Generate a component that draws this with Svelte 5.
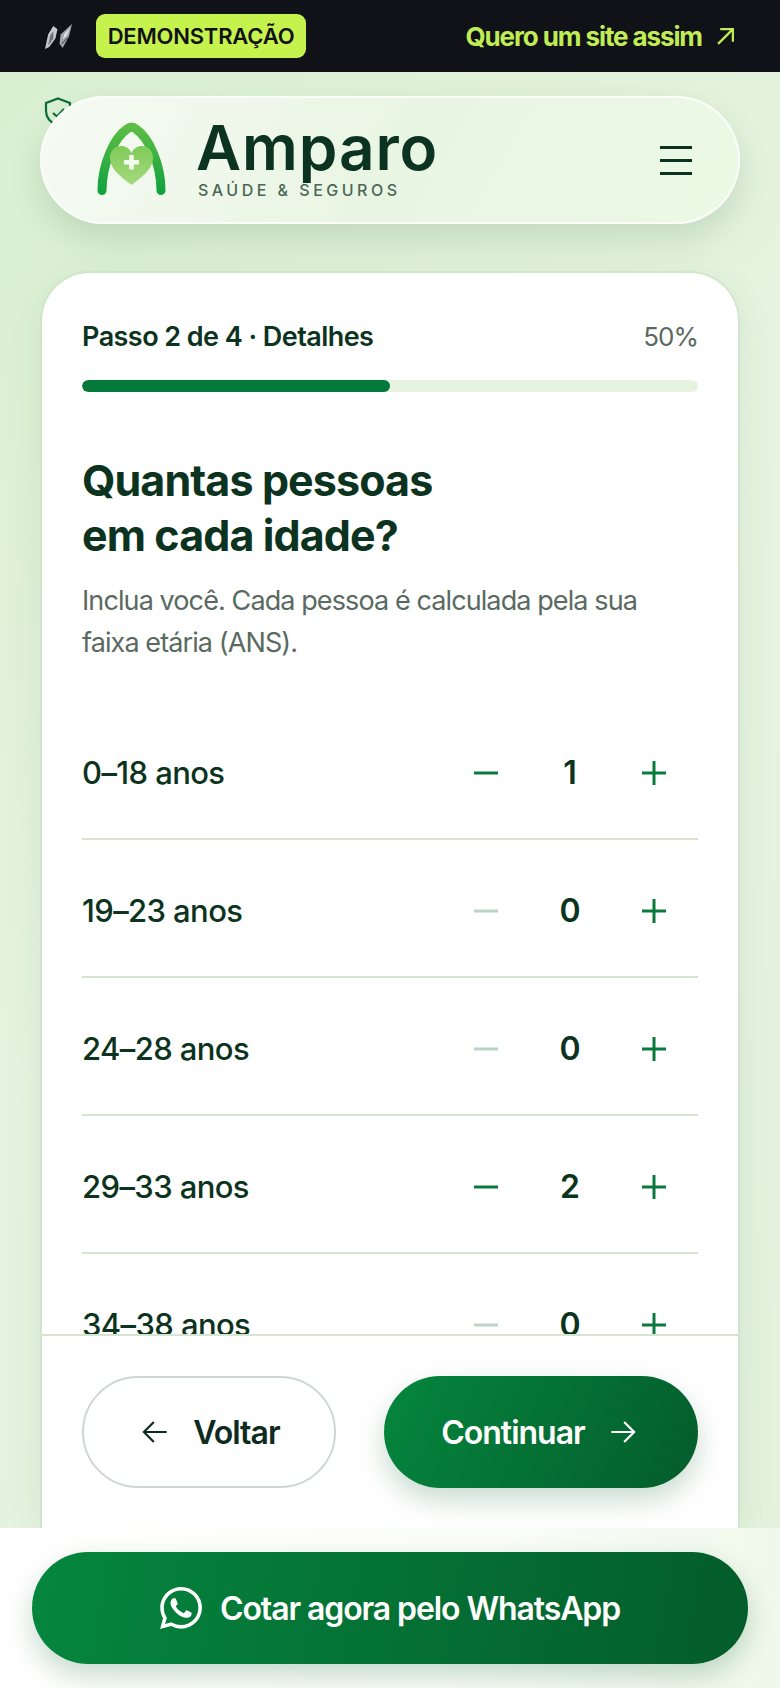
<script>
  const rows = [
    { label: '0–18 anos', n: 1 },
    { label: '19–23 anos', n: 0 },
    { label: '24–28 anos', n: 0 },
    { label: '29–33 anos', n: 2 },
    { label: '34–38 anos', n: 0 }
  ];
</script>

<div class="page">
  <div class="demo">
    <svg class="mark" viewBox="0 0 26 24" aria-hidden="true">
      <path d="M0 24 L3 10 L8 2 L12 5 L10 14 L4 22 Z" fill="#c9c9cc" />
      <path d="M3 21 L5 11 L8 7 L8 14 Z" fill="#6f6f74" />
      <path d="M14 19 L15 10 L26 0 L23 12 L17 23 Z" fill="#a6a6aa" />
      <path d="M17 15 L19 9 L24 4 L21 11 Z" fill="#e3e3e5" />
      <path d="M16 19 L22 13" stroke="#55555a" stroke-width="1" />
    </svg>
    <span class="chip">DEMONSTRAÇÃO</span>
    <a class="want" href="#top">
      Quero um site assim
      <svg viewBox="0 0 16 16" width="17" height="17" aria-hidden="true"><path d="M1 15 L15 1 M3 1 H15 V13" fill="none" stroke="currentColor" stroke-width="2.200" /></svg>
    </a>
  </div>

  <main class="main">
    <svg class="shield" viewBox="0 0 28 30" aria-hidden="true">
      <path d="M14 1.500 L26 6 V14 C26 21 21 26 14 29 C7 26 2 21 2 14 V6 Z" fill="none" stroke="#0b6b3a" stroke-width="2.200" />
      <path d="M9 16 L13 19.500 L20 12" fill="none" stroke="#0b6b3a" stroke-width="2.200" />
    </svg>

    <header class="head">
      <svg class="logo" viewBox="0 0 70 74" aria-hidden="true">
        <defs>
          <linearGradient id="arch" x1="0" y1="1" x2="0" y2="0">
            <stop offset="0" stop-color="#12a33f" />
            <stop offset="1" stop-color="#5cbd44" />
          </linearGradient>
          <linearGradient id="heart" x1="0" y1="0" x2="0" y2="1">
            <stop offset="0" stop-color="#7fcb58" />
            <stop offset="1" stop-color="#a5da7e" />
          </linearGradient>
        </defs>
        <path d="M5 68.500 C5 42 17 16 30 7 C33 4.500 36 4.500 39 7 C52 16 64 42 64 68.500" fill="none" stroke="url(#arch)" stroke-width="9" stroke-linecap="round" stroke-linejoin="round" />
        <path d="M34.500 63 C24 55 13 47 13 36 C13 28.500 18 24 24 24 C28.500 24 32.500 26.500 34.500 31 C36.500 26.500 40.500 24 45 24 C51 24 56 28.500 56 36 C56 47 45 55 34.500 63 Z" fill="url(#heart)" />
        <path d="M34.500 33 V47.500 M27 40.200 H42" stroke="#f4fbef" stroke-width="4.600" />
      </svg>
      <div class="brand">
        <div class="name">Amparo</div>
        <div class="tag">SAÚDE &amp; SEGUROS</div>
      </div>
      <button class="burger" aria-label="Menu"><span></span><span></span><span></span></button>
    </header>

    <section class="card">
      <div class="body">
        <div class="step"><b>Passo 2 de 4 · Detalhes</b><span>50%</span></div>
        <div class="track"><div class="fill"></div></div>
        <h1>Quantas pessoas<br />em cada idade?</h1>
        <p>Inclua você. Cada pessoa é calculada pela sua faixa etária (ANS).</p>
        <div class="rows">
          {#each rows as r}
            <div class="row">
              <span class="age">{r.label}</span>
              <button class="btn" class:off={r.n === 0} aria-label="Menos">
                <svg viewBox="0 0 24 24" width="24" height="24"><path d="M0 12 H24" stroke="currentColor" stroke-width="3" /></svg>
              </button>
              <span class="val">{r.n}</span>
              <button class="btn" aria-label="Mais">
                <svg viewBox="0 0 24 24" width="24" height="24"><path d="M0 12 H24 M12 0 V24" stroke="currentColor" stroke-width="3" /></svg>
              </button>
            </div>
          {/each}
        </div>
      </div>
      <div class="actions">
        <button class="back">
          <svg viewBox="0 0 24 24" width="28" height="28" aria-hidden="true"><path d="M22 12 H3 M11 3.500 L2.500 12 L11 20.500" fill="none" stroke="currentColor" stroke-width="1.900" /></svg>
          Voltar
        </button>
        <button class="next">
          Continuar
          <svg viewBox="0 0 24 24" width="28" height="28" aria-hidden="true"><path d="M2 12 H21 M13 3.500 L21.500 12 L13 20.500" fill="none" stroke="currentColor" stroke-width="1.900" /></svg>
        </button>
      </div>
    </section>
  </main>

  <footer class="foot">
    <button class="wa">
      <svg viewBox="0 0 24 24" width="42" height="42" aria-hidden="true"><path fill="currentColor" d="M17.472 14.382c-.297-.149-1.758-.867-2.03-.967-.273-.099-.471-.148-.67.15-.197.297-.767.966-.94 1.164-.173.199-.347.223-.644.075-.297-.15-1.255-.463-2.39-1.475-.883-.788-1.48-1.761-1.653-2.059-.173-.297-.018-.458.13-.606.134-.133.298-.347.446-.52.149-.174.198-.298.298-.497.099-.198.05-.371-.025-.52-.075-.149-.669-1.612-.916-2.207-.242-.579-.487-.5-.669-.51-.173-.008-.371-.01-.57-.01-.198 0-.52.074-.792.372-.272.297-1.04 1.016-1.04 2.479 0 1.462 1.065 2.875 1.213 3.074.149.198 2.096 3.2 5.077 4.487.709.306 1.262.489 1.694.625.712.227 1.36.195 1.871.118.571-.085 1.758-.719 2.006-1.413.248-.694.248-1.289.173-1.413-.074-.124-.272-.198-.57-.347m-5.421 7.403h-.004a9.87 9.87 0 01-5.031-1.378l-.361-.214-3.741.982.998-3.648-.235-.374a9.86 9.86 0 01-1.51-5.26c.001-5.45 4.436-9.884 9.888-9.884 2.64 0 5.122 1.03 6.988 2.898a9.825 9.825 0 012.893 6.994c-.003 5.45-4.437 9.884-9.885 9.884m8.413-18.297A11.815 11.815 0 0012.05 0C5.495 0 .16 5.335.157 11.892c0 2.096.547 4.142 1.588 5.945L.057 24l6.305-1.654a11.882 11.882 0 005.683 1.448h.005c6.554 0 11.89-5.335 11.893-11.893a11.821 11.821 0 00-3.48-8.413Z" /></svg>
      Cotar agora pelo WhatsApp
    </button>
  </footer>
</div>

<style>
  :global(html),
  :global(body) {
    margin: 0;
    height: 1688px;
    overflow: hidden;
    background: #e4f2de;
  }
  .page {
    width: 780px;
    height: 1688px;
    display: flex;
    flex-direction: column;
    overflow: hidden;
    font-family: Inter, "Liberation Sans", sans-serif;
    color: #0b3320;
    background: linear-gradient(135deg, #d9efcf 0%, #e6f3e0 45%, #e3f1dd 100%);
  }
  button {
    font-family: inherit;
    border: 0;
    background: none;
    padding: 0;
    color: inherit;
  }

  .demo {
    height: 72px;
    flex: none;
    background: #111118;
    display: flex;
    align-items: center;
    padding: 0 46px 0 45px;
  }
  .mark {
    width: 27px;
    height: 25px;
    margin-right: 24px;
  }
  .chip {
    height: 44px;
    width: 210px;
    box-sizing: border-box;
    display: flex;
    align-items: center;
    justify-content: center;
    background: #c6f24e;
    border-radius: 9px;
    color: #111118;
    font-size: 22px;
    font-weight: 600;
    letter-spacing: -0.2px;
  }
  .want {
    margin-left: auto;
    display: flex;
    align-items: center;
    gap: 15px;
    color: #c0ec55;
    text-decoration: none;
    font-size: 26px;
    font-weight: 700;
    letter-spacing: -1.1px;
  }

  .main {
    flex: 1;
    min-height: 0;
    position: relative;
    padding: 24px 40px 0;
    display: flex;
    flex-direction: column;
  }
  .shield {
    position: absolute;
    left: 44px;
    top: 25px;
    width: 28px;
    height: 30px;
  }
  .head {
    position: relative;
    height: 128px;
    flex: none;
    box-sizing: border-box;
    display: flex;
    align-items: center;
    padding: 0 46px 0 55px;
    border-radius: 64px;
    border: 2px solid rgba(255, 255, 255, 0.75);
    background: linear-gradient(120deg, #f6fbf4 0%, #e9f5e3 50%, #ebf9e5 100%);
    box-shadow: 0 16px 32px rgba(20, 80, 40, 0.14);
  }
  .logo {
    width: 70px;
    height: 74px;
    flex: none;
    margin-top: -2px;
  }
  .brand {
    margin-left: 29px;
    margin-top: -5px;
  }
  .name {
    font-size: 62px;
    font-weight: 600;
    line-height: 62px;
    letter-spacing: 0.9px;
    color: #0b3320;
  }
  .tag {
    font-size: 16px;
    font-weight: 500;
    letter-spacing: 3.500px;
    line-height: 18px;
    margin: 2px 0 0 2px;
    color: #4a6656;
  }
  .burger {
    margin-left: auto;
    width: 32px;
    display: flex;
    flex-direction: column;
    gap: 10px;
  }
  .burger span {
    display: block;
    height: 3px;
    background: #0b3320;
  }

  .card {
    margin: 49px 2px 0;
    flex: 1;
    min-height: 0;
    box-sizing: border-box;
    display: flex;
    flex-direction: column;
    background: #fff;
    border-radius: 48px 48px 0 0;
    box-shadow: 0 0 0 2px rgba(200, 224, 192, 0.5), 0 8px 40px rgba(20, 80, 40, 0.08);
  }
  .body {
    height: 1061px;
    flex: none;
    overflow: hidden;
    box-sizing: border-box;
    padding: 47px 40px 0;
  }
  .step {
    display: flex;
    justify-content: space-between;
    align-items: center;
    font-size: 27px;
    line-height: 34px;
  }
  .step b {
    font-weight: 600;
    letter-spacing: -0.55px;
  }
  .step span {
    font-size: 26px;
    color: #5a6a61;
    letter-spacing: -1px;
  }
  .track {
    margin-top: 26px;
    height: 12px;
    border-radius: 6px;
    background: #e6f3e0;
    overflow: hidden;
  }
  .fill {
    width: 50%;
    height: 100%;
    border-radius: 6px;
    background: #047a3a;
  }
  h1 {
    margin: 61px 0 0;
    font-size: 43px;
    line-height: 55px;
    font-weight: 700;
    letter-spacing: -0.9px;
    color: #0b3320;
  }
  p {
    margin: 17px 0 0;
    font-size: 27px;
    line-height: 42px;
    letter-spacing: -0.9px;
    color: #5a6a61;
  }
  .rows {
    margin-top: 38px;
  }
  .row {
    height: 138px;
    box-sizing: border-box;
    padding-top: 5px;
    display: flex;
    align-items: center;
    border-bottom: 2px solid #d4e6cd;
  }
  .age {
    font-size: 31px;
    letter-spacing: -0.6px;
    margin-right: auto;
    font-weight: 500;
  }
  .btn {
    width: 88px;
    height: 88px;
    display: flex;
    align-items: center;
    justify-content: center;
    color: #0a7a3c;
  }
  .btn.off {
    color: #b9d6c3;
  }
  .val {
    width: 80px;
    text-align: center;
    font-size: 32px;
    font-weight: 600;
  }

  .actions {
    flex: 1;
    display: flex;
    gap: 48px;
    padding: 40px 40px 0;
    border-top: 2px solid #d4e6cd;
  }
  .back,
  .next {
    height: 112px;
    border-radius: 56px;
    box-sizing: border-box;
    display: flex;
    align-items: center;
    justify-content: center;
    gap: 24px;
    font-size: 32px;
    font-weight: 600;
    letter-spacing: -1px;
  }
  .back {
    width: 254px;
    padding-left: 3px;
    border: 2px solid #d0d6d2;
    color: #0f2a1e;
    background: #fff;
  }
  .next {
    width: 314px;
    padding-right: 4px;
    color: #fff;
    background: linear-gradient(115deg, #05863e 0%, #045c2b 100%);
    box-shadow: 0 12px 28px rgba(4, 90, 43, 0.22);
  }

  .foot {
    height: 160px;
    flex: none;
    box-sizing: border-box;
    padding: 24px 32px 0;
    position: relative;
    background: linear-gradient(100deg, #ffffff 0%, #fbfdf9 60%, #eff8ea 100%);
  }
  .wa {
    width: 716px;
    height: 112px;
    border-radius: 56px;
    display: flex;
    align-items: center;
    justify-content: center;
    gap: 18px;
    color: #fff;
    font-size: 32px;
    font-weight: 600;
    letter-spacing: -1.1px;
    background: linear-gradient(100deg, #05863e 0%, #045c2b 100%);
    box-shadow: 0 12px 28px rgba(4, 90, 43, 0.22);
  }
</style>
